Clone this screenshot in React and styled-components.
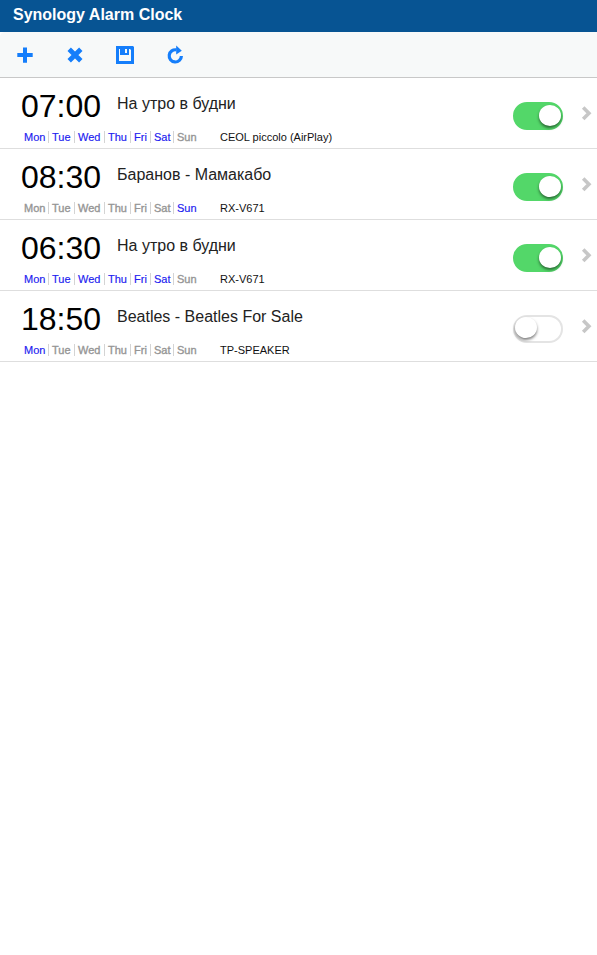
import React from 'react';
import styled, { createGlobalStyle } from 'styled-components';

const GlobalStyle = createGlobalStyle`
  * { box-sizing: border-box; }
  body { margin: 0; background: #fff; font-family: "Liberation Sans", Arial, sans-serif; color: #000; }
`;

const Page = styled.main`
  min-height: 955px;
  background: #fff;
`;

const TitleBar = styled.header`
  height: 32px;
  padding: 5px 13px 0;
  background: #075493;
  color: #fff;
  font-size: 16px;
  font-weight: bold;
  line-height: 19px;
`;

const ToolbarBack = styled.div`
  background: #fff;
`;

const Toolbar = styled.nav`
  display: flex;
  height: 46px;
  background: #f7f9f9;
  border-bottom: 1px solid #c8c8c8;
  border-top-left-radius: 5px;
`;

const ToolButton = styled.button`
  display: flex;
  align-items: flex-start;
  justify-content: center;
  width: 50px;
  height: 45px;
  padding: 13px 0 0;
  border: 0;
  background: none;
  color: #157efb;
`;

const AlarmList = styled.ul`
  margin: 0;
  padding: 0;
  list-style: none;
`;

const AlarmRow = styled.li`
  display: flex;
  height: 71px;
  border-bottom: 1px solid #dedede;
`;

const Details = styled.div`
  flex: 1;
  padding: 10px 0 0 21px;
`;

const Heading = styled.div`
  display: flex;
  height: 43px;
`;

const Time = styled.div`
  width: 96px;
  font-size: 32px;
  line-height: 37px;
`;

const Name = styled.div`
  font-size: 16px;
  line-height: 18px;
  padding-top: 7px;
  color: #222;
  white-space: nowrap;
`;

const Schedule = styled.div`
  display: flex;
  padding-left: 3px;
  font-size: 11px;
  line-height: 13px;
`;

const Days = styled.div`
  display: grid;
  grid-template-columns: 28px 26px 30px 26px 20px 23px 43px;
`;

const Day = styled.span`
  display: flex;
  height: 13px;
  color: ${(p) => (p.$active ? '#2020f0' : '#959595')};
  -webkit-text-stroke: ${(p) => (p.$active ? '0.15px #2020f0' : '0.35px #959595')};
  &:not(:last-child)::after {
    content: '';
    width: 1px;
    height: 12px;
    margin: 0 3px 0 auto;
    background: #d4d4d4;
  }
`;

const Speaker = styled.span`
  color: #111;
  white-space: nowrap;
`;

const Switch = styled.button`
  display: flex;
  align-items: flex-start;
  justify-content: ${(p) => (p.$on ? 'flex-end' : 'flex-start')};
  width: 50px;
  height: 28px;
  margin-top: 24px;
  padding: ${(p) => (p.$on ? '1px 0 0' : '0')};
  border: 2px solid ${(p) => (p.$on ? '#53d769' : '#e4e4e4')};
  border-radius: 14px;
  background: ${(p) => (p.$on ? '#53d769' : '#fff')};
`;

const Knob = styled.span`
  width: 22px;
  height: 21px;
  border-radius: 50%;
  background: #fff;
  box-shadow: 0 2px 3px rgba(0, 0, 0, 0.5);
`;

const Disclosure = styled.span`
  width: 34px;
  padding: 28px 0 0 18px;
  color: #c7c7c7;
  svg { display: block; }
`;

const PlusIcon = () => (
  <svg width="20" height="20" viewBox="0 0 20 20" fill="currentColor">
    <path d="M8 2.5h4V8h5.7v4H12v5.7H8V12H2.3V8H8z" />
  </svg>
);

const CrossIcon = () => (
  <svg width="20" height="20" viewBox="0 0 20 20" fill="none" stroke="currentColor" strokeWidth="4.8">
    <path d="M4.2 4.2l11.6 11.6M15.8 4.2L4.2 15.8" />
  </svg>
);

const SaveIcon = () => (
  <svg width="20" height="20" viewBox="0 0 20 20" fill="currentColor">
    <path fillRule="evenodd" d="M1 1h17l1 1v17H1zM4 4v12h12V5l-1-1h-1v6H5V4zM10 4v4h2V4z" />
  </svg>
);

const ReloadIcon = () => (
  <svg width="20" height="20" viewBox="0 0 20 20" fill="none">
    <path d="M11.5 4.9A6.1 6.1 0 1 0 16.4 11" stroke="currentColor" strokeWidth="3.2" />
    <path d="M11.2 .4l5.6 5.4-5.6 3.8z" fill="currentColor" />
  </svg>
);

const ChevronIcon = () => (
  <svg width="12" height="16" viewBox="0 0 12 16" fill="none" stroke="currentColor" strokeWidth="3.6">
    <path d="M2.2 1.6l5.7 5.7-5.7 5.7" />
  </svg>
);

const tools = [
  { label: 'Add', Icon: PlusIcon },
  { label: 'Delete', Icon: CrossIcon },
  { label: 'Save', Icon: SaveIcon },
  { label: 'Reload', Icon: ReloadIcon },
];

const weekdays = ['Mon', 'Tue', 'Wed', 'Thu', 'Fri', 'Sat', 'Sun'];

const alarms = [
  { time: '07:00', name: 'На утро в будни', days: [0, 1, 2, 3, 4, 5], speaker: 'CEOL piccolo (AirPlay)', on: true },
  { time: '08:30', name: 'Баранов - Мамакабо', days: [6], speaker: 'RX-V671', on: true },
  { time: '06:30', name: 'На утро в будни', days: [0, 1, 2, 3, 4, 5], speaker: 'RX-V671', on: true },
  { time: '18:50', name: 'Beatles - Beatles For Sale', days: [0], speaker: 'TP-SPEAKER', on: false },
];

export default function App() {
  return (
    <Page>
      <GlobalStyle />
      <TitleBar>Synology Alarm Clock</TitleBar>
      <ToolbarBack>
        <Toolbar>
          {tools.map(({ label, Icon }) => (
            <ToolButton key={label} aria-label={label}><Icon /></ToolButton>
          ))}
        </Toolbar>
      </ToolbarBack>
      <AlarmList>
        {alarms.map((alarm) => (
          <AlarmRow key={alarm.time}>
            <Details>
              <Heading>
                <Time>{alarm.time}</Time>
                <Name>{alarm.name}</Name>
              </Heading>
              <Schedule>
                <Days>
                  {weekdays.map((day, i) => (
                    <Day key={day} $active={alarm.days.includes(i)}>{day}</Day>
                  ))}
                </Days>
                <Speaker>{alarm.speaker}</Speaker>
              </Schedule>
            </Details>
            <Switch $on={alarm.on} role="switch" aria-checked={alarm.on} aria-label={alarm.name}>
              <Knob />
            </Switch>
            <Disclosure><ChevronIcon /></Disclosure>
          </AlarmRow>
        ))}
      </AlarmList>
    </Page>
  );
}
